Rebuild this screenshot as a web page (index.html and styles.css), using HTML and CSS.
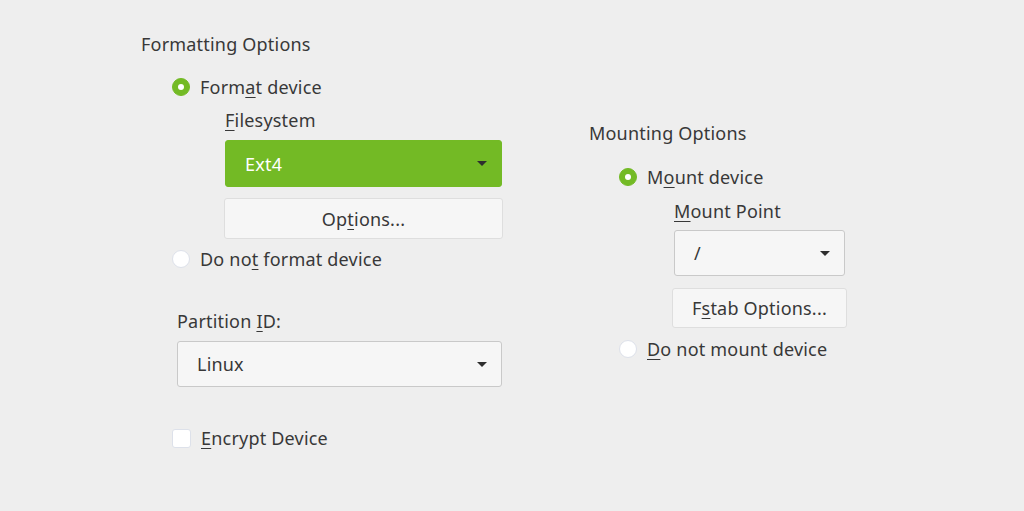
FILE: index.html
```html
<!DOCTYPE html>
<html>
<head>
<meta charset="utf-8">
<link rel="stylesheet" href="styles.css">
</head>
<body>
<div class="page">
  <div class="col left">
    <div class="heading">Formatting Options</div>
    <div class="radio-row r-format">
      <span class="radio checked"></span><span>Form<u>a</u>t device</span>
    </div>
    <div class="indent">
      <div class="label l-fs"><u>F</u>ilesystem</div>
      <div class="combo green"><span>Ext4</span><span class="arrow light"></span></div>
      <div class="button b-options">Op<u>t</u>ions...</div>
    </div>
    <div class="radio-row r-noformat">
      <span class="radio"></span><span>Do no<u>t</u> format device</span>
    </div>
    <div class="label l-pid">Partition <u>I</u>D:</div>
    <div class="combo c-linux"><span>Linux</span><span class="arrow"></span></div>
    <div class="check-row">
      <span class="checkbox"></span><span><u>E</u>ncrypt Device</span>
    </div>
  </div>
  <div class="col right">
    <div class="heading">Mounting Options</div>
    <div class="radio-row r-mount">
      <span class="radio checked"></span><span>M<u>o</u>unt device</span>
    </div>
    <div class="indent2">
      <div class="label l-mp"><u>M</u>ount Point</div>
      <div class="combo c-mp"><span>/</span><span class="arrow"></span></div>
      <div class="button b-fstab">F<u>s</u>tab Options...</div>
    </div>
    <div class="radio-row r-nomount">
      <span class="radio"></span><span><u>D</u>o not mount device</span>
    </div>
  </div>
</div>
</body>
</html>
```

FILE: styles.css
```css
html, body {
  margin: 0;
  padding: 0;
  background: #eeeeee;
}
body {
  width: 1024px;
  height: 511px;
  overflow: hidden;
  font-family: "Noto Sans", "Open Sans", sans-serif;
  font-size: 18px;
  letter-spacing: 0.2px;
  color: #383838;
}
u {
  text-decoration: underline;
  text-underline-offset: 3px;
  text-decoration-thickness: 1px;
}
.page {
  display: flex;
  padding-top: 32px;
}
.col {
  display: flex;
  flex-direction: column;
  align-items: flex-start;
}
.left {
  margin-left: 141px;
  width: 362px;
}
.right {
  margin-left: 86px;
  margin-top: 89px;
}
.heading {
  height: 24px;
  line-height: 24px;
}
.radio-row, .check-row {
  display: flex;
  align-items: center;
  height: 24px;
  line-height: 24px;
}
.radio {
  width: 18px;
  height: 18px;
  border-radius: 50%;
  box-sizing: border-box;
  background: #ffffff;
  border: 1px solid #dde1ea;
  margin-right: 10px;
  position: relative;
}
.radio.checked {
  background: #73ba25;
  border-color: #73ba25;
}
.radio.checked::after {
  content: "";
  position: absolute;
  left: 5px;
  top: 5px;
  width: 6px;
  height: 6px;
  border-radius: 50%;
  background: #ffffff;
}
.checkbox {
  width: 19px;
  height: 19px;
  box-sizing: border-box;
  background: #ffffff;
  border: 1px solid #dde1ea;
  border-radius: 3px;
  margin-right: 10px;
}
.r-format { margin-top: 19px; margin-left: 31px; }
.indent {
  margin-left: 83px;
  display: flex;
  flex-direction: column;
  align-items: flex-start;
}
.label {
  height: 24px;
  line-height: 24px;
}
.l-fs { margin-top: 9px; margin-left: 1px; }
.combo {
  display: flex;
  align-items: center;
  justify-content: space-between;
  box-sizing: border-box;
  border-radius: 3px;
  padding: 0 14px 0 19px;
  background: #f6f6f6;
  border: 1px solid #c9c9c9;
}
.combo.green {
  margin-top: 8px;
  margin-left: 1px;
  width: 277px;
  height: 47px;
  background: #73ba25;
  border-color: #73ba25;
  color: #ffffff;
}
.arrow {
  width: 0;
  height: 0;
  border-left: 5px solid transparent;
  border-right: 5px solid transparent;
  border-top: 5px solid #2e2e2e;
}
.button {
  box-sizing: border-box;
  display: flex;
  align-items: center;
  justify-content: center;
  background: #f6f6f6;
  border: 1px solid #dedede;
  border-radius: 3px;
}
.b-options {
  margin-top: 11px;
  width: 279px;
  height: 41px;
}
.r-noformat { margin-top: 8px; margin-left: 31px; }
.l-pid { margin-top: 38px; margin-left: 36px; }
.c-linux {
  margin-top: 8px;
  margin-left: 36px;
  width: 325px;
  height: 46px;
}
.check-row { margin-top: 39px; margin-left: 31px; }
.r-mount { margin-top: 20px; margin-left: 30px; }
.indent2 {
  margin-left: 83px;
  display: flex;
  flex-direction: column;
  align-items: flex-start;
}
.l-mp { margin-top: 10px; margin-left: 2px; }
.c-mp {
  margin-top: 7px;
  margin-left: 2px;
  width: 171px;
  height: 46px;
}
.b-fstab {
  margin-top: 12px;
  width: 175px;
  height: 40px;
}
.r-nomount { margin-top: 9px; margin-left: 30px; }
```
